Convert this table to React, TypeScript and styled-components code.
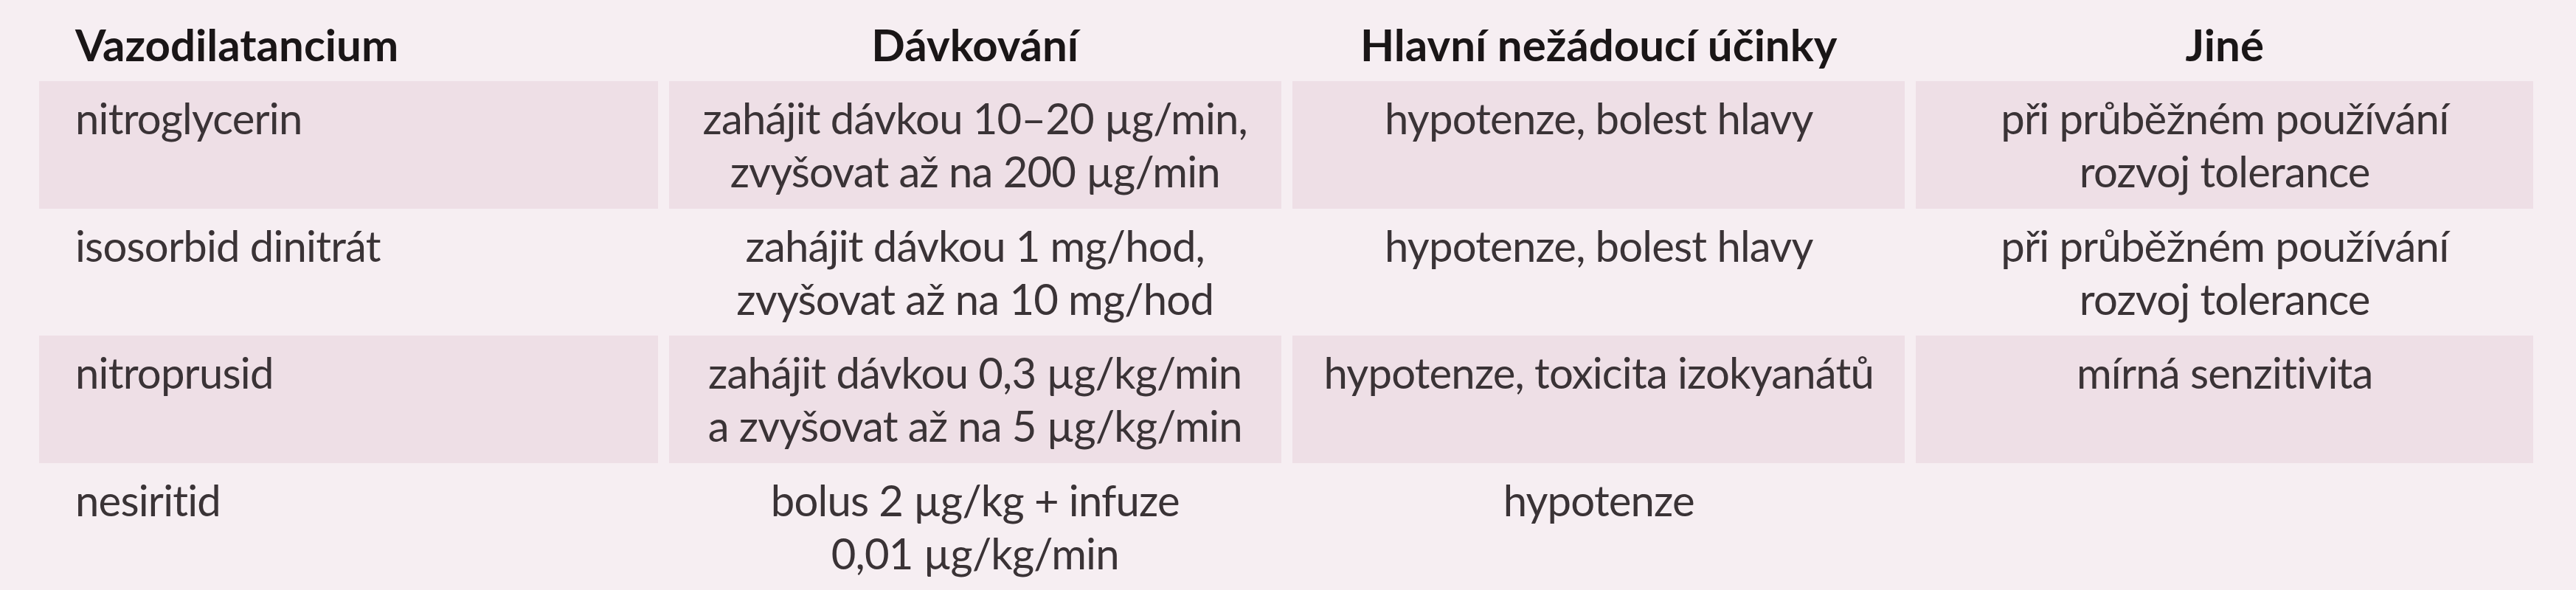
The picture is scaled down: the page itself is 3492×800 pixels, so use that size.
import React from "react";
import styled, { createGlobalStyle } from "styled-components";

const Global = createGlobalStyle`
  html, body {
    margin: 0;
    padding: 0;
    background: #f6eef2;
  }
  body {
    font-family: "Lato", "Liberation Sans", sans-serif;
    -webkit-font-smoothing: antialiased;
  }
`;

const Table = styled.div`
  display: flex;
  flex-direction: column;
  padding: 0 58px 0 53px;
  width: 3492px;
  box-sizing: border-box;
`;

const Row = styled.div<{ $head?: boolean }>`
  display: grid;
  grid-template-columns: 838fr 830fr 830fr 836fr;
  column-gap: 15px;
  height: ${(p) => (p.$head ? "110px" : "172.5px")};
`;

const Cell = styled.div<{ $shaded?: boolean; $first?: boolean; $head?: boolean }>`
  box-sizing: border-box;
  background: ${(p) => (p.$shaded ? "#eedfe6" : "transparent")};
  padding: ${(p) => (p.$head ? "24px" : "14px")} 0 0 ${(p) => (p.$first ? "49px" : "0")};
  text-align: ${(p) => (p.$first ? "left" : "center")};
  font-size: ${(p) => (p.$head ? "60px" : "58px")};
  line-height: 72px;
  font-weight: ${(p) => (p.$head ? 700 : 400)};
  color: ${(p) => (p.$head ? "#1a1617" : "#3a3336")};
  letter-spacing: ${(p) => (p.$head ? "0" : "-0.8px")};
  white-space: nowrap;
`;

const Line = styled.span`
  display: block;
`;

type RowData = { name: string; dose: string[]; effects: string[]; other: string[] };

const headers = ["Vazodilatancium", "Dávkování", "Hlavní nežádoucí účinky", "Jiné"];

const rows: RowData[] = [
  {
    name: "nitroglycerin",
    dose: ["zahájit dávkou 10–20 µg/min,", "zvyšovat až na 200 µg/min"],
    effects: ["hypotenze, bolest hlavy"],
    other: ["při průběžném používání", "rozvoj tolerance"],
  },
  {
    name: "isosorbid dinitrát",
    dose: ["zahájit dávkou 1 mg/hod,", "zvyšovat až na 10 mg/hod"],
    effects: ["hypotenze, bolest hlavy"],
    other: ["při průběžném používání", "rozvoj tolerance"],
  },
  {
    name: "nitroprusid",
    dose: ["zahájit dávkou 0,3 µg/kg/min", "a zvyšovat až na 5 µg/kg/min"],
    effects: ["hypotenze, toxicita izokyanátů"],
    other: ["mírná senzitivita"],
  },
  {
    name: "nesiritid",
    dose: ["bolus 2 µg/kg + infuze", "0,01 µg/kg/min"],
    effects: ["hypotenze"],
    other: [],
  },
];

const Lines = ({ items }: { items: string[] }) => (
  <>
    {items.map((t, i) => (
      <Line key={i}>{t}</Line>
    ))}
  </>
);

export default function App() {
  return (
    <>
      <Global />
      <Table>
        <Row $head>
          {headers.map((h, i) => (
            <Cell key={h} $head $first={i === 0}>
              {h}
            </Cell>
          ))}
        </Row>
        {rows.map((r, i) => {
          const shaded = i % 2 === 0;
          return (
            <Row key={r.name}>
              <Cell $shaded={shaded} $first>
                {r.name}
              </Cell>
              <Cell $shaded={shaded}>
                <Lines items={r.dose} />
              </Cell>
              <Cell $shaded={shaded}>
                <Lines items={r.effects} />
              </Cell>
              <Cell $shaded={shaded}>
                <Lines items={r.other} />
              </Cell>
            </Row>
          );
        })}
      </Table>
    </>
  );
}
